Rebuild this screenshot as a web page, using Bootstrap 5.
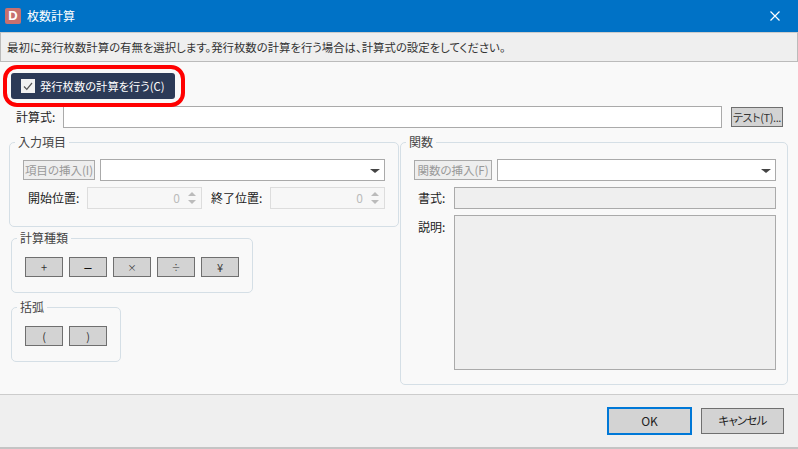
<!DOCTYPE html>
<html lang="ja">
<head>
<meta charset="utf-8">
<title>枚数計算</title>
<link href="https://cdn.jsdelivr.net/npm/bootstrap@5.3.0/dist/css/bootstrap.min.css" rel="stylesheet">
<style>
html,body{margin:0;width:798px;height:449px;overflow:hidden}
body{font-family:"Noto Sans CJK JP","Noto Sans",sans-serif;font-size:12px;line-height:16px;background:#f9f9f9;color:#222;font-feature-settings:"palt"}
.dlg{width:798px;height:449px}
.titlebar{height:32px;background:#0072c6;color:#fff;padding-left:5px}
.logo{width:16px;height:16px;background:#c8706e;border-radius:2px;color:#fff;font:bold 13px/16px "Liberation Sans",sans-serif;text-align:center;margin-right:6px}
.closex{margin-left:auto;margin-right:18px}
.infobar{height:30px;background:#efefef;border:1px solid #bbb;border-top-color:#ccc;padding-left:6px;color:#333;font-size:11.4px}
.mainarea{height:332px;position:relative}
.checkwrap{position:relative;margin:11px 0 0 11px;width:164px;height:26px;background:#2c3a57;border-radius:3px;color:#fff;padding-left:10px;font-size:11.3px}
.checkring{position:absolute;left:-8px;top:-8px;width:182px;height:42px;border:4px solid #f00;border-radius:14px}
.cbox{width:14px;height:14px;background:#f2f2f2;margin-right:5px}
.formularow{height:22px;margin-top:7px}
.lbl{color:#222}
.formulalbl{margin-left:16px;width:47px}
.field{background:#fff;border:1px solid #aaa;height:22px}
.formulafield{width:659px}
.gbtn{background:#d3d3d3;border:1px solid #6f6f6f;color:#333;display:flex;align-items:center;justify-content:center;line-height:1;padding:0;white-space:nowrap}
.testbtn{width:52px;height:20px;margin-left:9px;font-size:11px;letter-spacing:-.4px}
.cols{margin-top:14px}
.leftcol{width:400px}
.grp{position:relative;border:1px solid #d5dfe6;border-radius:5px}
.grplegend{position:absolute;top:-9px;left:5px;padding:0 3px;background:#f9f9f9;color:#444}
.grpin{margin-left:9px;width:390px;height:85px;padding-top:17px;padding-left:13px}
.disbtn{background:#eee;border:1px solid #aaa;color:#999;display:flex;align-items:center;justify-content:center;height:20px;white-space:nowrap;font-size:11.5px}
.ins1{width:72px}
.sel{position:relative}
.sel1{width:285px;margin-left:5px;margin-top:-1px}
.caret{position:absolute;right:4px;top:9px;width:0;height:0;border-left:5px solid transparent;border-right:5px solid transparent;border-top:4px solid #444}
.spinrow{margin-top:6px;height:22px}
.spin{position:relative;width:115px;height:22px;border:1px solid #ddd;background:#f7f7f7;color:#bbb;text-align:right;padding-right:21px;line-height:20px}
.spinup,.spindn{position:absolute;right:5px;width:0;height:0;border-left:4px solid transparent;border-right:4px solid transparent}
.spinup{top:4px;border-bottom:4px solid #bbb}
.spindn{bottom:4px;border-top:4px solid #bbb}
.l1{width:59px;margin-left:5px;text-align:left}
.l2{width:59px;margin-left:9px}
.grp2{margin:11px 0 0 11px;width:242px;height:55px;padding:18px 0 0 13px}
.grp3{margin:14px 0 0 11px;width:110px;height:55px;padding:18px 0 0 13px}
.opbtn{width:38px;height:20px;margin-right:6px;font-size:11px}
.opsm{font-size:9px}
.opwide{font-size:15px;color:#111}
.grpf{width:388px;height:243px;margin-top:0;padding:17px 0 0 13px}
.ins2{width:78px}
.sel2{width:279px;margin-left:5px;margin-top:-1px}
.flbl{width:40px;padding-left:4px}
.gfield{width:322px;height:22px;background:#efefef;border:1px solid #aaa}
.gtall{height:155px}
.frow{margin-top:6px}
.footerbar{height:55px;background:#efefef;border-top:1px solid #ccc;border-bottom:2px solid #c4c4c4;padding-right:14px}
.okbtn{width:85px;height:28px;border:2px solid #0078d7;font-size:12px;margin-right:9px;color:#222}
.cancelbtn{width:83px;height:26px;font-size:11.5px;letter-spacing:-.8px;color:#222}
</style>
</head>
<body>
<div class="dlg d-flex flex-column">
  <div class="titlebar d-flex align-items-center">
    <div class="logo">D</div>
    <div>枚数計算</div>
    <svg class="closex" width="10" height="10" viewBox="0 0 10 10"><path d="M0.5 0.5L9.5 9.5M9.5 0.5L0.5 9.5" stroke="#fff" stroke-width="1.2" fill="none"/></svg>
  </div>
  <div class="infobar d-flex align-items-center">最初に発行枚数計算の有無を選択します。発行枚数の計算を行う場合は、計算式の設定をしてください。</div>
  <div class="mainarea">
    <div class="checkwrap d-flex align-items-center">
      <div class="cbox d-flex align-items-center justify-content-center">
        <svg width="12" height="12" viewBox="0 0 12 12"><path d="M2 6.5L4.8 9.3L10 3" stroke="#555" stroke-width="1.2" fill="none"/></svg>
      </div>
      <div>発行枚数の計算を行う(C)</div>
      <div class="checkring"></div>
    </div>
    <div class="formularow d-flex align-items-center">
      <div class="lbl formulalbl">計算式:</div>
      <div class="field formulafield"></div>
      <div class="gbtn testbtn">テスト(T)...</div>
    </div>
    <div class="cols d-flex">
      <div class="leftcol">
        <div class="grp grpin">
          <div class="grplegend">入力項目</div>
          <div class="d-flex">
            <div class="disbtn ins1">項目の挿入(I)</div>
            <div class="field sel sel1"><span class="caret"></span></div>
          </div>
          <div class="spinrow d-flex align-items-center">
            <div class="lbl l1">開始位置:</div>
            <div class="spin">0<span class="spinup"></span><span class="spindn"></span></div>
            <div class="lbl l2">終了位置:</div>
            <div class="spin">0<span class="spinup"></span><span class="spindn"></span></div>
          </div>
        </div>
        <div class="grp grp2 d-flex align-items-start">
          <div class="grplegend">計算種類</div>
          <div class="gbtn opbtn">+</div>
          <div class="gbtn opbtn opwide">−</div>
          <div class="gbtn opbtn opsm">×</div>
          <div class="gbtn opbtn opsm">÷</div>
          <div class="gbtn opbtn">¥</div>
        </div>
        <div class="grp grp3 d-flex align-items-start">
          <div class="grplegend">括弧</div>
          <div class="gbtn opbtn">(</div>
          <div class="gbtn opbtn">)</div>
        </div>
      </div>
      <div class="grp grpf">
        <div class="grplegend">関数</div>
        <div class="d-flex">
          <div class="disbtn ins2">関数の挿入(F)</div>
          <div class="field sel sel2"><span class="caret"></span></div>
        </div>
        <div class="d-flex align-items-center frow">
          <div class="lbl flbl">書式:</div>
          <div class="gfield"></div>
        </div>
        <div class="d-flex frow">
          <div class="lbl flbl pt-1">説明:</div>
          <div class="gfield gtall"></div>
        </div>
      </div>
    </div>
  </div>
  <div class="footerbar d-flex align-items-center justify-content-end">
    <div class="gbtn okbtn">OK</div>
    <div class="gbtn cancelbtn">キャンセル</div>
  </div>
</div>
</body>
</html>
